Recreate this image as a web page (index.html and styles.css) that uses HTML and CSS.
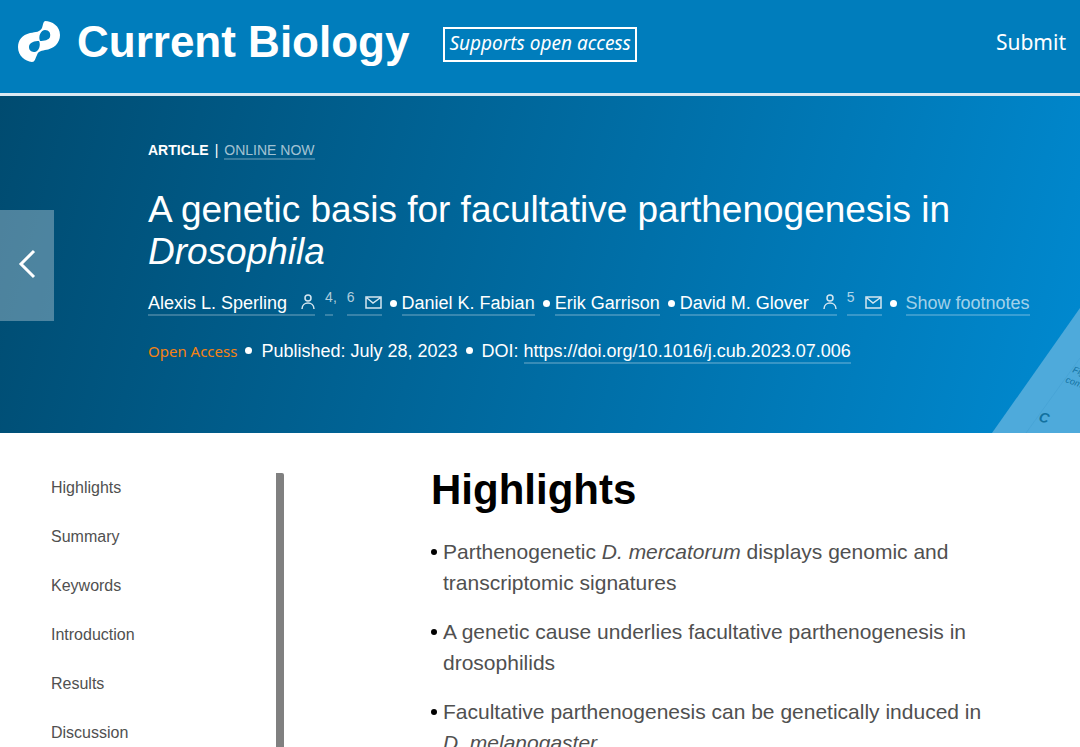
FILE: index.html
```html
<!DOCTYPE html>
<html lang="en">
  <head>
    <meta charset="UTF-8" />
    <meta name="viewport" content="width=device-width, initial-scale=1.0" />
    <title>A genetic basis for facultative parthenogenesis in Drosophila: Current Biology</title>
    <link rel="stylesheet" href="styles.css">
  </head>
  <body>
    <header class="site-header">
      <a href="#" class="logo">
        <svg class="logo-mark" viewBox="0 0 42 41" aria-hidden="true">
          <path fill="#fff" fill-rule="evenodd" d="M27 0C34 0 42 5 42 14C42 22 36 28 27 29C22 30 20 31 19 34C17 38 17 41 14 41C7 40 0 35 0 26C0 19 4 14 12 12C18 11 22 11 24 7C25 4 25 1 27 0ZM22 20C20 15 23 9 27 9C31 9 33 12 32 16C31 19 26 20 22 20ZM21 20C17 20 11 21 11 26C11 30 14 31 17 31C21 30 23 24 21 20Z" />
        </svg>
        <span>Current Biology</span>
      </a>
      <a href="#" class="open-badge">Supports open access</a>
      <a href="#" class="submit-link">Submit</a>
    </header>

    <section class="hero">
      <button type="button" class="prev-button" aria-label="Previous article">
        <svg width="18" height="30" viewBox="0 0 18 30" aria-hidden="true">
          <path d="M16 2L3 15L16 28" fill="none" stroke="#fff" stroke-width="3" />
        </svg>
      </button>

      <div class="article-type">
        <strong>ARTICLE</strong>
        <span>|</span>
        <a href="#" class="line-link faded">ONLINE NOW</a>
      </div>
      <h1>A genetic basis for facultative parthenogenesis in <i>Drosophila</i></h1>

      <ul class="authors">
        <li>
          <a href="#" class="line-link">Alexis L. Sperling <svg class="person" viewBox="0 0 14 15"><circle cx="7" cy="4" r="3" /><path d="M1 15C1 7 13 7 13 15" /></svg></a>
          <span class="note"><a href="#" class="line-link"><sup>4</sup></a><sup>,</sup></span>
          <a href="#" class="line-link mail-link" aria-label="Email Alexis L. Sperling"><sup>6</sup><svg class="mail" viewBox="0 0 17 13"><path d="M1 1H16V12H1ZM2 2L8 7L15 2" /></svg></a>
        </li>
        <li><a href="#" class="line-link">Daniel K. Fabian</a></li>
        <li><a href="#" class="line-link">Erik Garrison</a></li>
        <li>
          <a href="#" class="line-link">David M. Glover <svg class="person" viewBox="0 0 14 15"><circle cx="7" cy="4" r="3" /><path d="M1 15C1 7 13 7 13 15" /></svg></a>
          <a href="#" class="line-link mail-link" aria-label="Email David M. Glover"><sup>5</sup><svg class="mail" viewBox="0 0 17 13"><path d="M1 1H16V12H1ZM2 2L8 7L15 2" /></svg></a>
        </li>
        <li class="footnotes"><a href="#" class="line-link faded">Show footnotes</a></li>
      </ul>

      <ul class="published">
        <li class="open-access">Open Access</li>
        <li>Published: July 28, 2023</li>
        <li>DOI: <a href="#" class="line-link">https://doi.org/10.1016/j.cub.2023.07.006</a></li>
      </ul>

      <svg class="figure-corner" viewBox="0 0 88 125" aria-hidden="true">
        <path d="M0 125L88 0V125Z" fill="#4eaadb" />
        <path d="M34 125L88 50" stroke="#48a4d6" stroke-width="1" />
        <text x="46" y="113" transform="rotate(15 46 113)" font-size="14" font-weight="bold">C</text>
        <text x="80" y="64" transform="rotate(20 80 64)" font-size="9">Figure</text>
        <text x="73" y="74" transform="rotate(20 73 74)" font-size="9">comp</text>
      </svg>
    </section>

    <div class="page">
      <nav class="sections">
        <a href="#highlights">Highlights</a>
        <a href="#">Summary</a>
        <a href="#">Keywords</a>
        <a href="#">Introduction</a>
        <a href="#">Results</a>
        <a href="#">Discussion</a>
      </nav>
      <main id="highlights">
        <h2>Highlights</h2>
        <ul class="highlights">
          <li>Parthenogenetic <i>D. mercatorum</i> displays genomic and transcriptomic signatures</li>
          <li>A genetic cause underlies facultative parthenogenesis in drosophilids</li>
          <li>Facultative parthenogenesis can be genetically induced in <i>D. melanogaster</i></li>
        </ul>
      </main>
    </div>
  </body>
</html>
```
FILE: styles.css
```css
* {
  margin: 0;
  padding: 0;
  box-sizing: border-box;
}
body {
  font-family: "Liberation Sans", Arial, sans-serif;
  background: #fff;
  color: #505050;
}
a {
  color: inherit;
  text-decoration: none;
}
ul {
  list-style: none;
}
.site-header {
  display: flex;
  align-items: flex-start;
  padding: 15px 14px 25px 18px;
  background: #007dbc;
  border-bottom: 3px solid #dce9f2;
  color: #fff;
}
.logo {
  display: flex;
  align-items: flex-start;
  gap: 17px;
  font-size: 44px;
  font-weight: bold;
  line-height: 53px;
  white-space: nowrap;
}
.logo-mark {
  width: 42px;
  height: 41px;
  margin-top: 6px;
}
.open-badge {
  margin: 12px 0 0 34px;
  padding: 0 4px 2px;
  border: 2px solid #fff;
  font-family: "Noto Sans", sans-serif;
  font-size: 19px;
  font-style: italic;
  line-height: 29px;
  white-space: nowrap;
}
.submit-link {
  margin: 12px 0 0 auto;
  font-family: "Noto Sans", sans-serif;
  font-size: 21px;
  line-height: 31px;
}
.hero {
  position: relative;
  padding: 46px 40px 69px 148px;
  background: linear-gradient(105deg, #004b70 0%, #0088ce 97%);
  color: #fff;
}
.prev-button {
  position: absolute;
  top: 114px;
  left: 0;
  width: 54px;
  height: 111px;
  border: none;
  background: rgba(255, 255, 255, 0.3);
  cursor: pointer;
}
.article-type {
  display: flex;
  gap: 6px;
  font-size: 14px;
  line-height: 16px;
}
.line-link {
  display: inline-block;
  border-bottom: 2px solid rgba(255, 255, 255, 0.22);
}
.faded {
  color: rgba(255, 255, 255, 0.65);
}
h1 {
  margin: 29px 0 19px;
  font-size: 37px;
  font-weight: normal;
  line-height: 42px;
}
.authors,
.published {
  display: flex;
  flex-wrap: wrap;
  font-size: 18px;
  line-height: 22px;
}
.authors li {
  display: flex;
}
.authors li + li::before,
.published li + li::before {
  content: "";
  display: inline-block;
  flex: none;
  width: 7px;
  height: 7px;
  border-radius: 50%;
  background: #fff;
}
.authors li + li::before {
  margin: 8px 5px 0 8px;
}
.authors .footnotes::before {
  margin-right: 9px;
}
.authors svg {
  fill: none;
  stroke: #d5e6f0;
  stroke-width: 1.5;
}
.person {
  width: 14px;
  height: 15px;
  margin-left: 9px;
}
.mail {
  width: 17px;
  height: 13px;
}
.note,
.mail-link {
  margin-left: 10px;
}
.mail-link sup {
  margin-right: 10px;
}
sup {
  font-size: 14px;
  line-height: 0;
  color: rgba(255, 255, 255, 0.7);
}
.published {
  margin-top: 24px;
}
.published li + li::before {
  margin: 0 9px 3px 8px;
}
.published .open-access {
  font-family: "Noto Sans", sans-serif;
  font-size: 15px;
  color: #f68212;
}
.figure-corner {
  position: absolute;
  right: 0;
  bottom: 0;
  width: 88px;
  height: 125px;
}
.figure-corner text {
  font-style: italic;
  fill: #12719f;
}
.page {
  display: grid;
  grid-template-columns: 233px 1fr;
  column-gap: 147px;
  padding: 33px 80px 0 51px;
}
.sections {
  display: flex;
  flex-direction: column;
  gap: 31px;
  margin-top: 7px;
  padding-top: 6px;
  border-right: 8px solid #808080;
  border-radius: 2px;
  font-size: 16px;
  line-height: 18px;
}
h2 {
  margin-bottom: 22px;
  color: #000;
  font-size: 42px;
  line-height: 48px;
}
.highlights {
  font-size: 21px;
  line-height: 31px;
}
.highlights li {
  position: relative;
  margin-bottom: 18px;
  padding-left: 12px;
}
.highlights li::before {
  content: "";
  position: absolute;
  top: 13px;
  left: 0;
  width: 6px;
  height: 6px;
  border-radius: 50%;
  background: #000;
}
```
